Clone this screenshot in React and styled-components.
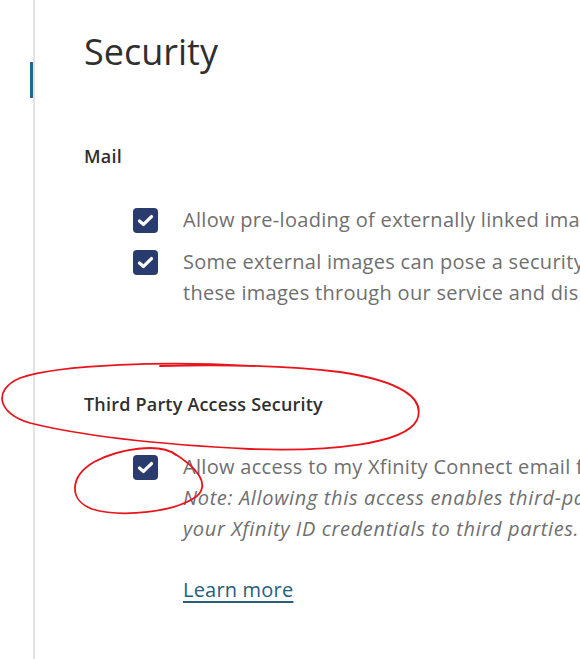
import React from "react";
import styled, { createGlobalStyle } from "styled-components";

const GlobalStyle = createGlobalStyle`
  html, body {
    margin: 0;
    padding: 0;
    background: #ffffff;
    overflow: hidden;
  }
  body {
    font-family: "Open Sans", "Noto Sans", sans-serif;
  }
`;

const Page = styled.div`
  position: relative;
  display: flex;
  width: 580px;
  height: 659px;
  overflow: hidden;
  background: #fff;
`;

const Sidebar = styled.div`
  flex: 0 0 32px;
  border-right: 2px solid #e3e3e3;
  padding-top: 62px;
  box-sizing: border-box;
`;

const ActiveMark = styled.div`
  margin-left: 30px;
  width: 3px;
  height: 36px;
  background: #1f6a8c;
`;

const Main = styled.main`
  flex: 0 0 auto;
  padding: 27px 0 0 49px;
  white-space: nowrap;
`;

const Title = styled.h1`
  margin: 0;
  font-size: 36px;
  line-height: 50px;
  font-weight: 400;
  color: #2f2f2f;
`;

const SectionTitle = styled.h2`
  margin: ${(p) => p.$top}px 0 0;
  font-size: 18px;
  line-height: 26px;
  font-weight: 600;
  letter-spacing: 0.2px;
  color: #2f2f2f;
`;

const List = styled.div`
  display: flex;
  flex-direction: column;
  gap: 14px;
  margin: ${(p) => p.$top}px 0 0 49px;
`;

const Row = styled.div`
  display: flex;
  align-items: flex-start;
  gap: 25px;
`;

const Box = styled.span`
  flex: 0 0 25px;
  height: 25px;
  margin-top: 1px;
  border-radius: 4px;
  background: #2a3c6d;
  display: flex;
  align-items: center;
  justify-content: center;
`;

const Label = styled.div`
  font-size: 20px;
  line-height: 31px;
  letter-spacing: 0.3px;
  color: #6f6f6f;
  margin-top: -3px;
`;

const Note = styled.span`
  font-style: italic;
  letter-spacing: 0.65px;
`;

const LearnMore = styled.a`
  display: block;
  width: max-content;
  margin: 30px 0 0 99px;
  font-size: 20px;
  line-height: 31px;
  letter-spacing: 0.2px;
  color: #24607c;
  text-decoration: underline;
  text-underline-offset: 4px;
`;

const Scribble = styled.svg`
  position: absolute;
  left: 0;
  top: 0;
  pointer-events: none;
`;

const Check = () => (
  <Box>
    <svg width="17" height="13" viewBox="0 0 17 13">
      <path
        d="M2.5 7 L6.5 10.4 L14.5 2.6"
        fill="none"
        stroke="#fff"
        strokeWidth="3.3"
        strokeLinecap="round"
        strokeLinejoin="round"
      />
    </svg>
  </Box>
);

export default function App() {
  return (
    <>
      <GlobalStyle />
      <Page>
        <Sidebar>
          <ActiveMark />
        </Sidebar>
        <Main>
          <Title>Security</Title>
          <SectionTitle $top={66}>Mail</SectionTitle>
          <List $top={38}>
            <Row>
              <Check />
              <Label>Allow pre-loading of externally linked images</Label>
            </Row>
            <Row>
              <Check />
              <Label>
                Some external images can pose a security risk. To protect you, we will load
                <br />
                these images through our service and display them safely.
              </Label>
            </Row>
          </List>
          <SectionTitle $top={83}>Third Party Access Security</SectionTitle>
          <List $top={37}>
            <Row>
              <Check />
              <Label>
                Allow access to my Xfinity Connect email from third-party email programs
                <br />
                <Note>
                  Note: Allowing this access enables third-party programs to use and store
                  <br />
                  your Xfinity ID credentials to third parties.
                </Note>
              </Label>
            </Row>
          </List>
          <LearnMore href="#">Learn more</LearnMore>
        </Main>
        <Scribble width="580" height="659" viewBox="0 0 580 659">
          <path
            d="M250 366 C170 361 60 364 20 378 C-8 390 -2 414 30 423 C90 438 170 445 250 449 C330 452 405 444 417 420 C426 398 400 381 340 372 C300 367 240 364 160 366"
            fill="none"
            stroke="#e8141b"
            strokeWidth="1.8"
            strokeLinecap="round"
          />
          <path
            d="M176 455 C160 442 118 449 94 462 C70 476 68 500 92 509 C122 518 176 512 197 496 C210 484 198 468 172 452"
            fill="none"
            stroke="#e8141b"
            strokeWidth="1.8"
            strokeLinecap="round"
          />
        </Scribble>
      </Page>
    </>
  );
}
